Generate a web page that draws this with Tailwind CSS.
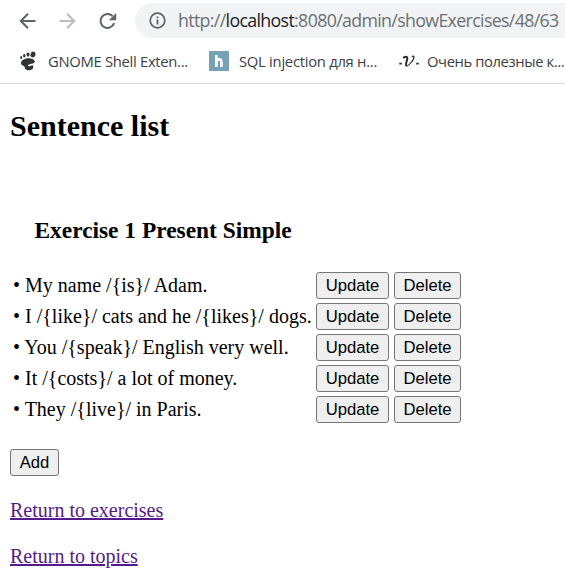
<!DOCTYPE html>
<html lang="en">
<head>
<meta charset="utf-8">
<title>Sentence list</title>
<script src="https://cdn.jsdelivr.net/npm/@tailwindcss/browser@4"></script>
</head>
<body class="bg-white w-[565px] h-[583px] overflow-hidden text-black">
<header class="h-[84px] border-b border-[#dadce0] font-['Open_Sans',sans-serif]">
  <div class="flex items-center h-[41px] pl-[18px]">
    <svg class="w-5 h-5 mr-5 shrink-0" viewBox="0 0 20 20" fill="none" stroke="#5f6368" stroke-width="2"><path d="M17.5 10H3M10 2.8L2.8 10l7.2 7.2"/></svg>
    <svg class="w-5 h-5 mr-5 shrink-0" viewBox="0 0 20 20" fill="none" stroke="#babcbe" stroke-width="2"><path d="M1.5 10H16M9 2.8l7.2 7.2L9 17.2"/></svg>
    <svg class="w-5 h-5 mr-[17px] shrink-0" viewBox="0 0 20 20" fill="none"><path d="M16.2 12.2A7 7 0 1 1 14.6 5" stroke="#5f6368" stroke-width="2"/><path d="M18.2 2v7.3h-7.4z" fill="#5f6368"/></svg>
    <div class="flex items-center grow min-w-0 h-[35px] rounded-l-full bg-[#f1f3f4] pl-[14px]">
      <svg class="w-[17px] h-[17px] mr-[4px] shrink-0" viewBox="0 0 17 17"><circle cx="8.5" cy="8.5" r="7.3" fill="none" stroke="#5f6368" stroke-width="1.7"/><path d="M7.6 7.4h1.8v5H7.6zM7.6 4.4h1.8v1.8H7.6z" fill="#5f6368"/></svg>
      <span class="ml-[8px] pb-px text-[17.8px] leading-[24px] whitespace-nowrap text-[#6d7073] tracking-[-0.66px]">http://<span class="text-[#202124]">localhost</span>:8080/admin/showExercises/48/63</span>
    </div>
  </div>
  <nav class="flex items-center h-[40px] text-[14.8px] leading-5 text-[#3c4043] whitespace-nowrap">
    <div class="flex items-center w-[189px] ml-[19px] shrink-0">
      <svg class="w-[18px] h-5 mr-[11px] shrink-0" viewBox="0 0 18 20" fill="#303436"><ellipse cx="14" cy="3.5" rx="2.4" ry="3" transform="rotate(18 14 3.5)"/><ellipse cx="9" cy="3.6" rx="1.5" ry="2.1"/><ellipse cx="5.3" cy="4.7" rx="1.2" ry="1.8"/><ellipse cx="2.2" cy="6.4" rx="1" ry="1.5"/><path d="M15.8 10.2C14.7 6.7 7.6 6.3 4 8.8c-3 2.3-2.3 5 .3 6 1.8.7 1 2.3 2.6 3.6 2.5 2 7.8.6 7.4-2.7-.2-1.8-1.4-1.8-2.5-1-1.5 1.2-3 .6-2.7-.4.4-1.6 7.3-.8 6.7-4.1z"/></svg>
      <span class="tracking-[-0.3px]">GNOME Shell Exten...</span>
    </div>
    <div class="flex items-center w-[190px] ml-[1px] shrink-0">
      <svg class="w-5 h-5 mr-[10px] shrink-0" viewBox="0 0 20 20"><path fill="#77a2b6" d="M0 0h20v20H0z"/><path d="M7.4 4v12M7.4 11.2c.5-3.7 5-3.7 5 0V16" fill="none" stroke="#fff" stroke-width="2.7"/></svg>
      <span class="tracking-[-0.27px]">SQL injection для н...</span>
    </div>
    <div class="flex items-center shrink-0">
      <svg class="w-5 h-5 mr-[8px] shrink-0" viewBox="0 0 20 20" fill="none" stroke="#292929"><path d="M.3 12.7h2.5M17.3 12.7h2.5" stroke-width="1.8"/><path d="M4.3 7.2c1.2-2 4-2.1 4 .2 0 2-2.2 5.2-1 7.7" stroke-width="2"/><path d="M7.3 15.3c3-.6 8-7 7.7-9.6-.1-.9-1.7-.7-1.8.5" stroke-width="1.2"/></svg>
      <span class="tracking-[-0.41px]">Очень полезные к...</span>
    </div>
  </nav>
</header>
<main class="px-[10px] pt-[25px] font-['Liberation_Serif',serif] text-[20px] leading-[23px]">
  <h2 class="text-[30px] leading-[34px] font-bold">Sentence list</h2>
  <h3 class="mt-[74px] ml-[24.5px] text-[23.4px] leading-[27px] font-bold">Exercise 1 Present Simple</h3>
  <div class="mt-[28px] ml-[3px] grid grid-cols-[298px_73px_67px] auto-rows-[27px] gap-x-[5px] gap-y-1 items-center whitespace-nowrap">
    <span>• My name /{is}/ Adam.</span>
    <button class="h-[27px] border border-[#767676] rounded-[3px] bg-[#efefef] font-['Liberation_Sans',sans-serif] text-[16.67px] leading-[19px]">Update</button>
    <button class="h-[27px] border border-[#767676] rounded-[3px] bg-[#efefef] font-['Liberation_Sans',sans-serif] text-[16.67px] leading-[19px]">Delete</button>
    <span>• I /{like}/ cats and he /{likes}/ dogs.</span>
    <button class="h-[27px] border border-[#767676] rounded-[3px] bg-[#efefef] font-['Liberation_Sans',sans-serif] text-[16.67px] leading-[19px]">Update</button>
    <button class="h-[27px] border border-[#767676] rounded-[3px] bg-[#efefef] font-['Liberation_Sans',sans-serif] text-[16.67px] leading-[19px]">Delete</button>
    <span>• You /{speak}/ English very well.</span>
    <button class="h-[27px] border border-[#767676] rounded-[3px] bg-[#efefef] font-['Liberation_Sans',sans-serif] text-[16.67px] leading-[19px]">Update</button>
    <button class="h-[27px] border border-[#767676] rounded-[3px] bg-[#efefef] font-['Liberation_Sans',sans-serif] text-[16.67px] leading-[19px]">Delete</button>
    <span>• It /{costs}/ a lot of money.</span>
    <button class="h-[27px] border border-[#767676] rounded-[3px] bg-[#efefef] font-['Liberation_Sans',sans-serif] text-[16.67px] leading-[19px]">Update</button>
    <button class="h-[27px] border border-[#767676] rounded-[3px] bg-[#efefef] font-['Liberation_Sans',sans-serif] text-[16.67px] leading-[19px]">Delete</button>
    <span>• They /{live}/ in Paris.</span>
    <button class="h-[27px] border border-[#767676] rounded-[3px] bg-[#efefef] font-['Liberation_Sans',sans-serif] text-[16.67px] leading-[19px]">Update</button>
    <button class="h-[27px] border border-[#767676] rounded-[3px] bg-[#efefef] font-['Liberation_Sans',sans-serif] text-[16.67px] leading-[19px]">Delete</button>
  </div>
  <button class="block mt-[26px] w-[49px] h-[27px] border border-[#767676] rounded-[3px] bg-[#efefef] font-['Liberation_Sans',sans-serif] text-[16.67px] leading-[19px]">Add</button>
  <a class="block w-fit mt-[23px] text-[#551a8b] underline" href="#">Return to exercises</a>
  <a class="block w-fit mt-[23px] text-[#551a8b] underline" href="#">Return to topics</a>
</main>
</body>
</html>
